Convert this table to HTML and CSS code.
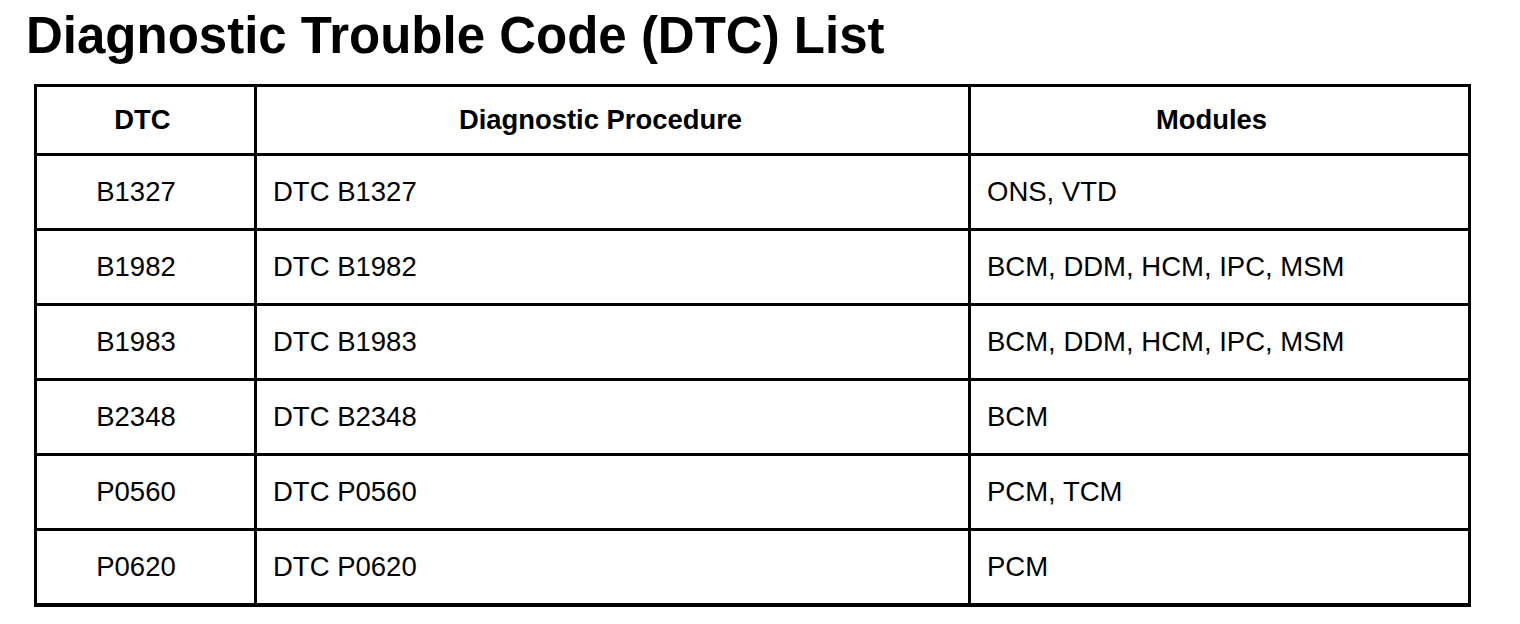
FILE: index.html
```html
<!DOCTYPE html>
<html lang="en">
<head>
<meta charset="utf-8">
<title>Diagnostic Trouble Code (DTC) List</title>
<link rel="stylesheet" href="styles.css">
</head>
<body>
<main class="page">
  <h1 class="title">Diagnostic Trouble Code (DTC) List</h1>
  <div class="dtc-table" role="table">
    <div class="cell head c1" role="columnheader">DTC</div>
    <div class="cell head c2" role="columnheader">Diagnostic Procedure</div>
    <div class="cell head c3" role="columnheader">Modules</div>

    <div class="cell row code" role="cell">B1327</div>
    <div class="cell row proc" role="cell">DTC B1327</div>
    <div class="cell row mods" role="cell">ONS, VTD</div>

    <div class="cell row code" role="cell">B1982</div>
    <div class="cell row proc" role="cell">DTC B1982</div>
    <div class="cell row mods" role="cell">BCM, DDM, HCM, IPC, MSM</div>

    <div class="cell row code" role="cell">B1983</div>
    <div class="cell row proc" role="cell">DTC B1983</div>
    <div class="cell row mods" role="cell">BCM, DDM, HCM, IPC, MSM</div>

    <div class="cell row code" role="cell">B2348</div>
    <div class="cell row proc" role="cell">DTC B2348</div>
    <div class="cell row mods" role="cell">BCM</div>

    <div class="cell row code" role="cell">P0560</div>
    <div class="cell row proc" role="cell">DTC P0560</div>
    <div class="cell row mods" role="cell">PCM, TCM</div>

    <div class="cell row code" role="cell">P0620</div>
    <div class="cell row proc" role="cell">DTC P0620</div>
    <div class="cell row mods" role="cell">PCM</div>
  </div>
</main>
</body>
</html>
```

FILE: styles.css
```css
html, body {
  margin: 0;
  padding: 0;
  background: #ffffff;
  color: #000000;
  font-family: "Liberation Sans", Arial, sans-serif;
}

.page {
  padding: 10px 0 0 26px;
}

.title {
  margin: 0;
  font-size: 51px;
  line-height: 51px;
  font-weight: bold;
  letter-spacing: 0;
}

.dtc-table {
  margin: 23px 0 0 8px;
  display: grid;
  grid-template-columns: 220px 714px 500px;
  grid-template-rows: 69px repeat(6, 75px);
  width: 1437px;
  box-sizing: border-box;
  border-right: 3px solid #000;
  border-bottom: 4px solid #000;
}

.cell {
  box-sizing: border-box;
  border-left: 3px solid #000;
  border-top: 3px solid #000;
  display: flex;
  align-items: center;
  font-size: 27.5px;
}

.head {
  font-weight: bold;
  justify-content: center;
  font-size: 27.4px;
}

.head.c1 { padding-right: 6px; }
.head.c2 { padding-right: 24px; }
.head.c3 { padding-right: 16px; }

.code {
  justify-content: center;
  padding-right: 19px;
}

.proc,
.mods {
  padding-left: 16px;
}
```
